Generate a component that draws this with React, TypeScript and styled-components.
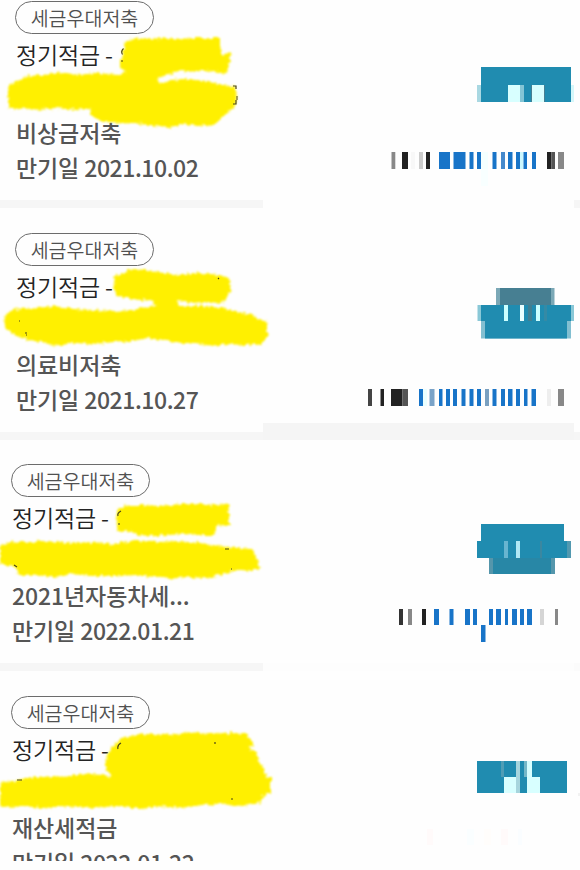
import React from "react";
import styled, { createGlobalStyle } from "styled-components";

const GlobalStyle = createGlobalStyle`
  * { box-sizing: border-box; }
  body { margin: 0; background: #fefefe; }
`;

const Screen = styled.main`
  width: 580px;
  height: 870px;
  padding-bottom: 9px;
  overflow: hidden;
  background: #fefefe;
  font-family: "Noto Sans CJK KR", "Noto Sans", sans-serif;
`;

const List = styled.div`
  height: 861px;
  overflow: hidden;
`;

const Card = styled.section<{ $height: number }>`
  position: relative;
  display: grid;
  grid-template-columns: 264px 316px;
  height: ${(p) => p.$height}px;
`;

const Details = styled.div<{ $top: number; $left: number }>`
  display: flex;
  flex-direction: column;
  align-items: flex-start;
  padding: ${(p) => p.$top}px 0 0 ${(p) => p.$left}px;
  white-space: nowrap;
`;

const Tag = styled.span`
  display: flex;
  flex: none;
  align-items: center;
  justify-content: center;
  width: 139px;
  height: 33px;
  margin-left: -1px;
  border: 1.5px solid #6c6c6c;
  border-radius: 17px;
  color: #505050;
  font-size: 19.5px;
  font-weight: 350;
  line-height: 30px;
`;

const Product = styled.div`
  height: 81px;
  padding-top: 3px;
  color: #242424;
  font-size: 23px;
  font-weight: 350;
  letter-spacing: -0.15px;
  line-height: 35px;
`;

const Strong = styled.div`
  flex: none;
  height: 35px;
  color: #555;
  font-size: 23px;
  font-weight: 500;
  letter-spacing: -0.1px;
  line-height: 35px;
`;

const Digits = styled.span`
  letter-spacing: -0.45px;
`;

const Amount = styled.svg`
  display: block;
  overflow: hidden;
`;

const Marker = styled.svg`
  position: absolute;
  top: 0;
  left: 0;
  z-index: 1;
  overflow: visible;
  pointer-events: none;
`;

const Separator = styled.div`
  display: grid;
  grid-template-columns: 263px 311px 6px;
  height: 8px;
`;

const Band = styled.div<{ $tone: string; $rise?: number }>`
  margin-top: ${(p) => -(p.$rise ?? 0)}px;
  background: ${(p) => p.$tone};
`;

const TEAL = "#208cb0";
const BLUE = "#1874c8";
const ICE = "#d8ffff";

type Cell = [x1: number, x2: number, y1: number, y2: number, fill: string];
type Bar = [x1: number, x2: number, fill?: string];

interface Account {
  y: number;
  height: number;
  top: number;
  left: number;
  name: string;
  date: string;
  cells: Cell[];
  barY: [number, number];
  bars: Bar[];
  strokes: string[];
  flecks: string;
}

const accounts: Account[] = [
  {
    y: 0, height: 200, top: 1, left: 16,
    name: "비상금저축", date: "2021.10.02",
    cells: [
      [477, 481, 85, 102, "#a9d8e2"], [571, 574, 85, 102, "#d5f7fa"],
      [481, 571, 67, 102, TEAL], [508, 520, 85, 102, ICE],
      [520, 524, 85, 102, "#84c5d5"], [531, 532, 85, 102, "#477f92"],
      [532, 544, 85, 102, ICE], [544, 545, 85, 102, "#477f92"],
    ],
    barY: [152, 169],
    bars: [
      [391.5, 395.3, "#888"], [402, 408, "#222"], [411, 415, "#f8f8f8"],
      [419, 423, "#ccc"], [426, 430, "#222"], [439, 450], [453.5, 465.5],
      [469.5, 473.5], [477, 481], [481, 488, "#f4ffff"], [492.5, 496.5],
      [501, 505, "#4589cc"], [508, 512.5], [516, 520], [520, 523.5, "#ccf8ff"],
      [523.5, 527], [532, 536], [547, 551.5, "#222"], [551.5, 555, "#555"], [558, 564, "#888"],
    ],
    strokes: [
      "M125 42L128 40 136 39 150 39 162 38 178 39 194 38 220 38 220 53 224 55 231 52 229 66 227 74 218 73 207 70 196 72 181 71 171 73 164 76 157 79 160 84 170 80 186 79 204 81 220 84 234 87 237 94 236 104 231 110 222 118 214 125 198 126 184 124 171 127 154 126 136 123 116 123 99 120 92 116 90 111 91 108 75 110 57 108 38 110 24 108 12 109 8 107 8 85 18 81 28 76 43 75 56 73 76 75 97 73 117 75 126 72 120 67 122 57Z",
    ],
    flecks: "M123.500 48.500q-3 3-1 6M121 61h2M233 86h3v3M236 97h2M236 99h2M233 104h3v-4",
  },
  {
    y: 208, height: 224, top: 25, left: 16,
    name: "의료비저축", date: "2021.10.27",
    cells: [
      [496, 554.5, 288, 305, "#7ba8b6"], [500, 551, 288, 305, "#477f92"],
      [477.5, 574, 305, 321, "#8ac8d7"], [481, 571, 305, 321, TEAL],
      [481, 571, 321, 338.5, "#82bfd1"], [485, 567, 321, 338.5, TEAL],
      [504, 508, 305, 321, "#cff"], [520, 524, 305, 321, "#eaffff"],
      [528, 532, 305, 321, "#407f92"], [536, 540, 305, 321, "#cff"],
      [544, 547, 305, 321, "#358aa5"],
    ],
    barY: [389, 406],
    bars: [
      [368, 372, "#444"], [380.5, 384, "#222"], [391, 402.5, "#222"], [402.5, 408, "#555"],
      [419, 423], [423, 427, "#eaffff"], [429.5, 434.5, "#7aa3c8"], [439, 442.5],
      [446, 450], [453, 457], [461.5, 465.5], [469.5, 473.5], [477, 481],
      [485, 489, "#7aa0c0"], [492.5, 496.5], [501, 505], [508, 512.5],
      [516, 520], [524, 527.5], [531.5, 536], [547, 551, "#eee"], [558, 564, "#888"],
    ],
    strokes: [
      "M115 275L126 273 128 269 146 270 164 273 181 275 201 273 219 275 229 278 231 288 228 297 222 303 207 302 191 303 178 301 179 306 202 306 222 308 239 312 251 314 261 320 267 322 267 337 260 344 244 345 226 344 212 346 196 343 182 343 168 341 149 338 133 341 114 342 94 344 73 343 55 346 42 342 26 340 13 334 6 329 4 321 6 314 17 309 35 308 55 306 73 309 94 310 114 311 133 310 147 307 158 305 151 301 132 299 117 296 114 291Z",
    ],
    flecks: "M218 278l1 1M25 333h2M26 335h1M19 321h1",
  },
  {
    y: 440, height: 223, top: 24, left: 12,
    name: "2021년자동차세...", date: "2022.01.21",
    cells: [
      [481, 564, 524, 541, TEAL], [477, 571, 541, 558, TEAL],
      [567, 571, 541, 558, "#5299b0"], [489, 555, 558, 574, "#5596ab"],
      [493, 551, 558, 574, "#2887a6"], [504, 508, 541, 558, "#68b5d0"],
      [516, 520, 541, 558, "#b0e8f5"], [540, 542, 541, 558, "#3b87a0"],
    ],
    barY: [609, 625],
    bars: [
      [399, 403, "#333"], [408, 412, "#888"], [422, 426, "#222"], [434, 439],
      [449.5, 453.5], [465, 470], [473, 477], [489, 493], [496, 501],
      [505, 508], [512, 517], [520, 524], [527, 532], [540, 544, "#d5d5d5"], [555, 558, "#888"],
    ],
    strokes: [
      "M118 508L128 506 141 505 160 506 181 504 202 504 218 505 229 504 229 525 216 526 215 535 198 535 179 534 156 536 139 535 133 532 118 530 116 521Z",
      "M0 545L13 542 32 542 48 541 68 543 92 542 114 544 135 541 158 542 177 541 200 543 218 546 238 548 252 549 256 557 260 568 249 571 238 570 221 575 207 578 187 577 170 579 155 577 137 575 116 576 93 576 70 574 54 577 36 575 18 575 16 567 0 564Z",
    ],
    flecks: "M121 511q-4 2-3 5M118 524h2M14 565l3 2M225 549h4M231 569h1",
  },
  {
    y: 671, height: 190, top: 25, left: 12,
    name: "재산세적금", date: "2022.01.22",
    cells: [
      [477, 567, 761, 793, TEAL], [501, 504, 761, 777, "#4f9db5"],
      [504, 516, 777, 793, ICE], [516, 520, 761, 793, "#a7d5dd"],
      [524, 527, 761, 777, "#74b8c8"], [527, 532, 761, 793, ICE],
      [532, 540, 777, 793, ICE], [578, 580, 793, 796, "#f2f2f2"],
    ],
    barY: [829, 845],
    bars: [[427, 433, "#fffafa"], [467, 474, "#fafeff"], [484, 491, "#fffdfb"], [501, 508, "#fffafa"], [518, 522, "#fafdff"]],
    strokes: [
      "M116 743L122 739 134 735 151 734 170 735 192 732 211 734 229 733 247 734 251 740 254 746 248 748 257 752 259 762 264 768 266 777 271 777 271 793 264 795 260 803 243 806 222 804 202 805 181 808 160 806 139 809 117 806 92 808 66 806 44 808 22 806 0 808 0 783 16 780 38 777 62 777 84 774 104 775 112 777 106 770 106 758 111 749Z",
    ],
    flecks: "M121 743q-4 2-3 6M215 742v2M231 799h2M17 780h5",
  },
];

const AmountMosaic = ({ account }: { account: Account }) => {
  const { y, height, cells, bars, barY } = account;
  return (
    <Amount
      width="316"
      height={height}
      viewBox={`264 ${y} 316 ${height}`}
      shapeRendering="geometricPrecision"
      aria-hidden="true"
    >
      {cells.map(([x1, x2, y1, y2, fill], i) => (
        <rect key={i} x={x1} y={y1} width={x2 - x1} height={y2 - y1} fill={fill} />
      ))}
      {bars.map(([x1, x2, fill = BLUE], i) => (
        <rect key={`b${i}`} x={x1} y={barY[0]} width={x2 - x1} height={barY[1] - barY[0]} fill={fill} />
      ))}
      {y === 440 && <rect x="481" y="625" width="4.5" height="17" fill={BLUE} />}
      {y === 0 && <rect x="481" y="169" width="7" height="17" fill="#f8ffff" />}
    </Amount>
  );
};

const MarkerStrokes = ({ account }: { account: Account }) => {
  const { y, height, strokes, flecks } = account;
  const id = `crayon-${y}`;
  return (
    <Marker width="280" height={height} viewBox={`0 ${y} 280 ${height}`} aria-hidden="true">
      <defs>
        <filter id={id} x="-5%" y="-10%" width="110%" height="120%" colorInterpolationFilters="sRGB">
          <feTurbulence type="fractalNoise" baseFrequency="0.3" numOctaves="2" seed={y + 3} />
          <feDisplacementMap in="SourceGraphic" scale="6" xChannelSelector="R" yChannelSelector="G" />
          <feGaussianBlur stdDeviation="0.8" />
        </filter>
      </defs>
      {strokes.map((d) => (
        <path key={d} d={d} fill="#fff000" filter={`url(#${id})`} />
      ))}
      <path d={flecks} fill="none" stroke="#4b4618" strokeWidth="1.2" />
    </Marker>
  );
};

const separators = [
  { left: "#f6f6f6", right: "#fefefe", edge: "#f6f6f6", rise: 0 },
  { left: "#f6f6f6", right: "#f5f5f5", edge: "#f6f6f6", rise: 9 },
  { left: "#f6f6f6", right: "#fdfdfd", edge: "#fbfbfb", rise: 0 },
];

export default function App() {
  return (
    <Screen>
      <GlobalStyle />
      <List>
        {accounts.map((account, i) => (
          <React.Fragment key={account.name}>
            <Card $height={account.height}>
              <Details $top={account.top} $left={account.left}>
                <Tag>세금우대저축</Tag>
                <Product>정기적금 -</Product>
                <Strong>{account.name}</Strong>
                <Strong>
                  만기일 <Digits>{account.date}</Digits>
                </Strong>
              </Details>
              <AmountMosaic account={account} />
              <MarkerStrokes account={account} />
            </Card>
            {separators[i] && (
              <Separator>
                <Band $tone={separators[i].left} />
                <Band $tone={separators[i].right} $rise={separators[i].rise} />
                <Band $tone={separators[i].edge} />
              </Separator>
            )}
          </React.Fragment>
        ))}
      </List>
    </Screen>
  );
}
